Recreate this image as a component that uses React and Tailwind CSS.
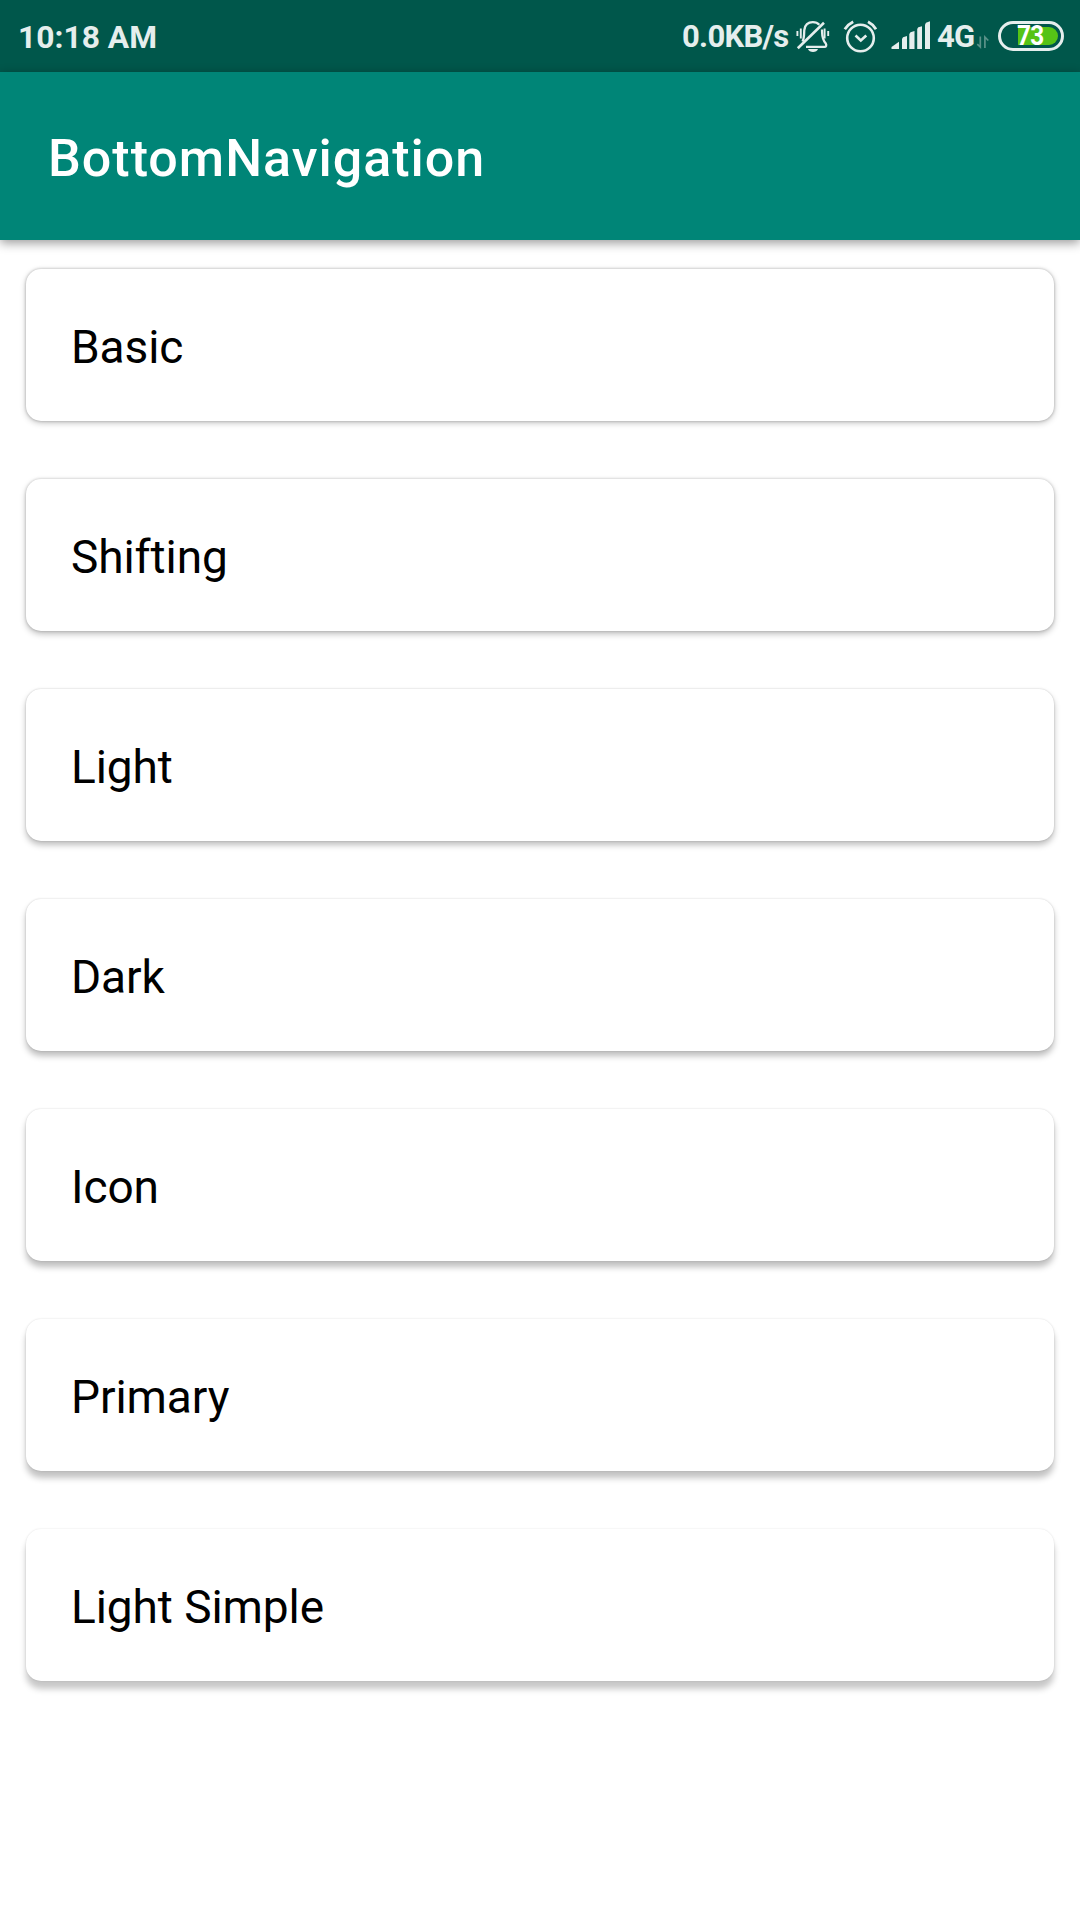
const items = [
  { label: 'Basic', shadow: 'shadow-[0_0_3px_rgba(0,0,0,0.26),0_2px_6px_rgba(0,0,0,0.23)]' },
  { label: 'Shifting', shadow: 'shadow-[0_0_3px_rgba(0,0,0,0.22),0_3px_6px_rgba(0,0,0,0.25)]' },
  { label: 'Light', shadow: 'shadow-[0_0_2px_rgba(0,0,0,0.2),0_4px_6px_rgba(0,0,0,0.26)]' },
  { label: 'Dark', shadow: 'shadow-[0_0_2px_rgba(0,0,0,0.19),0_5px_6px_rgba(0,0,0,0.26)]' },
  { label: 'Icon', shadow: 'shadow-[0_0_2px_rgba(0,0,0,0.17),0_6px_6px_rgba(0,0,0,0.25)]' },
  { label: 'Primary', shadow: 'shadow-[0_0_2px_rgba(0,0,0,0.15),0_7px_6px_rgba(0,0,0,0.24)]' },
  { label: 'Light Simple', shadow: 'shadow-[0_0_2px_rgba(0,0,0,0.13),0_8px_6px_rgba(0,0,0,0.22)]' },
];

function MutedBell() {
  return (
    <svg className="ml-[5px] h-[72px] w-[36px] shrink-0" viewBox="795 0 36 72" fill="none" stroke="#e5eeed" strokeWidth="2.3">
      <path d="M802.5 41.5C804.5 38 804 33 804.3 30C805 24.7 808.5 22.2 812.8 22.2C815.5 22.2 817.7 23 819.3 24.8" />
      <path d="M822 29.5C822.3 35 821.5 38.5 825.8 43.5C826.8 45.5 826 46.8 824.5 46.8H806" />
      <path d="M797.8 48.2L824 22.8" strokeWidth="2.6" />
      <path d="M808 49H818C817 53 809 53 808 49Z" fill="#e5eeed" stroke="none" />
      <path d="M797.4 31V36M800.8 28.5V38.5M824.6 28.5V38.5M828.2 31V36" strokeWidth="1.9" />
    </svg>
  );
}

function AlarmClock() {
  return (
    <svg className="ml-[10px] h-[72px] w-[38px] shrink-0" viewBox="841 0 38 72" fill="none" stroke="#e5eeed" strokeWidth="2.6">
      <circle cx="860.5" cy="38" r="13.3" />
      <path d="M855.5 35.5L860.8 40.5L866.3 35.5" strokeWidth="2.6" />
      <path d="M844.8 29.2Q847.8 24.5 853.2 21.8M868 21.8Q873.2 24.5 876 29.2" strokeWidth="2.8" />
    </svg>
  );
}

function SignalBars() {
  return (
    <svg className="ml-[11px] h-[72px] w-[42px] shrink-0" viewBox="890 0 42 72" fill="#e5eeed">
      <path d="M891.5 49V47L899 41.8V49Z" />
      <path d="M902 49V39L903 37.3L907 36V49Z" />
      <path d="M909.3 49V34L910.5 32.3L914.5 31V49Z" />
      <path d="M917.2 49V29L918.3 27.3L922 26.2V49Z" />
      <path d="M925 49V24.5L926 22.8L930 21.3V49Z" />
    </svg>
  );
}

function DataArrows() {
  return (
    <svg className="ml-[2px] h-[72px] w-[14px] shrink-0" viewBox="976 0 14 72" fill="none" stroke="#5b9289" strokeWidth="1.7">
      <path d="M980.3 36.5V47L977.3 44.2M984.9 48V37L988.3 40.5" />
    </svg>
  );
}

function Battery() {
  return (
    <div className="relative ml-[8px] h-[30px] w-[66px] shrink-0 rounded-full border-3 border-[#e5eeed]">
      <div className="ml-[17px] mt-[3px] h-[18px] w-[40px] rounded-r-full bg-[#56c315]" />
      <span className="absolute left-[16px] top-[-1px] origin-left scale-x-90 text-[27px] leading-[27px] font-bold tracking-[-0.8px] text-white">73</span>
    </div>
  );
}

export default function App() {
  return (
    <div className="flex h-[1920px] w-[1080px] flex-col overflow-hidden bg-white font-['Roboto',sans-serif]">
      <div className="flex h-[72px] shrink-0 items-center bg-[#00574b] text-[31px] leading-[36px] font-bold whitespace-nowrap text-[#e5eeed]">
        <span className="ml-[18px] mt-[1px] w-[664px] text-[31.8px]">10:18 AM</span>
        <span className="mt-[2px] w-[108px] tracking-[-0.7px]">0.0KB/s</span>
        <MutedBell />
        <AlarmClock />
        <SignalBars />
        <span className="mt-[2px] ml-[5px] w-[37px] tracking-[-0.8px]">4G</span>
        <DataArrows />
        <Battery />
      </div>
      <header className="flex h-[168px] shrink-0 items-center bg-[#008577] pl-[48px] shadow-[0_3px_10px_rgba(0,0,0,0.4)]">
        <h1 className="mt-[6px] text-[52px] leading-[60px] font-medium tracking-[1px] text-white">BottomNavigation</h1>
      </header>
      <main className="flex flex-col gap-[58px] px-[26px] pt-[29px]">
        {items.map(({ label, shadow }) => (
          <div key={label} className={`flex h-[152px] items-center rounded-[15px] bg-white pl-[45px] ${shadow}`}>
            <span className="mt-[4px] text-[46px] leading-[54px] tracking-[-0.07px] text-black">{label}</span>
          </div>
        ))}
      </main>
    </div>
  );
}
